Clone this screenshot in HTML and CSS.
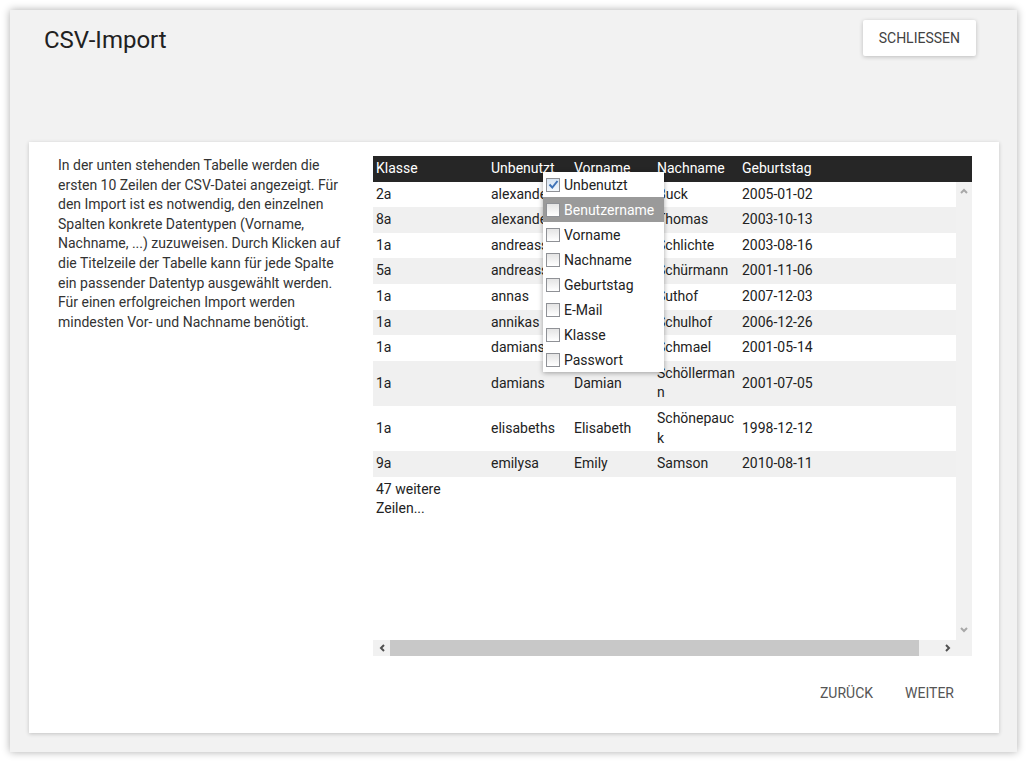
FILE: index.html
```html
<!DOCTYPE html>
<html lang="de">
<head>
<meta charset="utf-8">
<title>CSV-Import</title>
<link rel="stylesheet" href="styles.css">
</head>
<body>
<div class="dialog">
  <div class="dialog-header">
    <h1 class="title">CSV-Import</h1>
    <button class="btn-raised">Schliessen</button>
  </div>
  <div class="card">
    <div class="card-body">
      <p class="intro">In der unten stehenden Tabelle werden die ersten 10 Zeilen der CSV-Datei angezeigt. Für den Import ist es notwendig, den einzelnen Spalten konkrete Datentypen (Vorname, Nachname, ...) zuzuweisen. Durch Klicken auf die Titelzeile der Tabelle kann für jede Spalte ein passender Datentyp ausgewählt werden. Für einen erfolgreichen Import werden mindesten Vor- und Nachname benötigt.</p>
      <div class="table-wrap">
        <table class="grid grid-head">
          <colgroup><col class="c1"><col class="c2"><col class="c3"><col class="c4"><col class="c5"></colgroup>
          <tr><th>Klasse</th><th>Unbenutzt</th><th>Vorname</th><th>Nachname</th><th>Geburtstag</th></tr>
        </table>
        <div class="scroll-row">
          <div class="viewport">
            <table class="grid grid-body">
              <colgroup><col class="c1"><col class="c2"><col class="c3"><col class="c4"><col class="c5"></colgroup>
              <tr><td>2a</td><td>alexanderb</td><td>Alexander</td><td>Buck</td><td>2005-01-02</td></tr>
              <tr><td>8a</td><td>alexandert</td><td>Alexander</td><td>Thomas</td><td>2003-10-13</td></tr>
              <tr><td>1a</td><td>andreass</td><td>Andreas</td><td>Schlichte</td><td>2003-08-16</td></tr>
              <tr><td>5a</td><td>andreass</td><td>Andreas</td><td>Schürmann</td><td>2001-11-06</td></tr>
              <tr><td>1a</td><td>annas</td><td>Anna</td><td>Suthof</td><td>2007-12-03</td></tr>
              <tr><td>1a</td><td>annikas</td><td>Annika</td><td>Schulhof</td><td>2006-12-26</td></tr>
              <tr><td>1a</td><td>damians</td><td>Damian</td><td>Schmael</td><td>2001-05-14</td></tr>
              <tr><td>1a</td><td>damians</td><td>Damian</td><td>Schöllermann</td><td>2001-07-05</td></tr>
              <tr><td>1a</td><td>elisabeths</td><td>Elisabeth</td><td>Schönepauck</td><td>1998-12-12</td></tr>
              <tr><td>9a</td><td>emilysa</td><td>Emily</td><td>Samson</td><td>2010-08-11</td></tr>
              <tr><td>47 weitere Zeilen...</td><td></td><td></td><td></td><td></td></tr>
            </table>
          </div>
          <div class="vbar">
            <svg class="arrow" width="8" height="6" viewBox="0 0 8 6"><polyline points="1,5 4,2 7,5" fill="none" stroke="#a8a8a8" stroke-width="2"/></svg>
            <svg class="arrow" width="8" height="6" viewBox="0 0 8 6"><polyline points="1,1 4,4 7,1" fill="none" stroke="#a8a8a8" stroke-width="2"/></svg>
          </div>
        </div>
        <div class="hbar-row">
          <div class="hbar">
            <span class="hbtn"><svg width="6" height="8" viewBox="0 0 6 8"><polyline points="5,1 2,4 5,7" fill="none" stroke="#505050" stroke-width="2"/></svg></span>
            <span class="thumb"></span>
            <span class="hbtn"><svg width="6" height="8" viewBox="0 0 6 8"><polyline points="1,1 4,4 1,7" fill="none" stroke="#505050" stroke-width="2"/></svg></span>
          </div>
          <div class="corner"></div>
        </div>
        <div class="menu">
          <div class="menu-item"><span class="cb checked"><svg width="11" height="11" viewBox="0 0 11 11"><polyline points="1.5,5.5 4.3,8.5 9.5,2" fill="none" stroke="#3f73b8" stroke-width="2"/></svg></span>Unbenutzt</div>
          <div class="menu-item active"><span class="cb"></span>Benutzername</div>
          <div class="menu-item"><span class="cb"></span>Vorname</div>
          <div class="menu-item"><span class="cb"></span>Nachname</div>
          <div class="menu-item"><span class="cb"></span>Geburtstag</div>
          <div class="menu-item"><span class="cb"></span>E-Mail</div>
          <div class="menu-item"><span class="cb"></span>Klasse</div>
          <div class="menu-item"><span class="cb"></span>Passwort</div>
        </div>
      </div>
    </div>
    <div class="footer">
      <button class="btn-flat">Zurück</button>
      <button class="btn-flat">Weiter</button>
    </div>
  </div>
</div>
</body>
</html>
```
FILE: styles.css
```css
html, body {
  margin: 0;
  padding: 0;
  background: #ffffff;
  font-family: Roboto, "Liberation Sans", Arial, sans-serif;
}

.dialog {
  margin: 10px;
  width: 1007px;
  height: 742px;
  background: #f2f2f2;
  box-shadow: 0 0 8px rgba(0, 0, 0, 0.32);
  display: flex;
  flex-direction: column;
  box-sizing: border-box;
}

.dialog-header {
  height: 132px;
  flex: none;
  display: flex;
  justify-content: space-between;
  align-items: flex-start;
  padding: 10px 41px 0 34px;
  box-sizing: border-box;
}

.title {
  margin: 6px 0 0;
  font-size: 24px;
  font-weight: 400;
  line-height: 28px;
  color: #212121;
}

.btn-raised {
  height: 36px;
  padding: 0 16px;
  border: none;
  border-radius: 2px;
  background: #ffffff;
  box-shadow: 0 1px 4px rgba(0, 0, 0, 0.22);
  font-family: Roboto, "Liberation Sans", Arial, sans-serif;
  font-size: 14px;
  color: #424242;
  text-transform: uppercase;
}

.card {
  flex: 1;
  margin: 0 18px 19px 19px;
  background: #ffffff;
  box-shadow: 0 1px 4px rgba(0, 0, 0, 0.2);
  padding: 14px 27px 0 29px;
  display: flex;
  flex-direction: column;
}

.card-body {
  display: flex;
  gap: 27px;
}

.intro {
  width: 288px;
  margin: 0;
  font-size: 14px;
  line-height: 19.6px;
  color: #333333;
}

.table-wrap {
  position: relative;
  width: 599px;
}

.grid {
  border-collapse: collapse;
  table-layout: fixed;
  font-size: 14px;
  line-height: 19.6px;
}

.grid-head {
  width: 599px;
  background: #262626;
  color: #ffffff;
}

.grid-body {
  width: 583px;
  color: #222222;
}

.c1 { width: 115px; }
.c2 { width: 83px; }
.c3 { width: 83px; }
.c4 { width: 85px; }

.grid th,
.grid td {
  padding: 3px;
  text-align: left;
  font-weight: 400;
  vertical-align: middle;
  overflow-wrap: anywhere;
}

.grid-body tr:nth-child(even) {
  background: #f0f0f0;
}

.scroll-row {
  display: flex;
  height: 458px;
}

.viewport {
  width: 583px;
  overflow: hidden;
}

.vbar {
  width: 16px;
  background: #f1f1f1;
  display: flex;
  flex-direction: column;
  justify-content: space-between;
  align-items: center;
  padding: 6px 0 7px;
  box-sizing: border-box;
}

.arrow {
  display: block;
}

.hbar-row {
  display: flex;
  height: 16px;
}

.hbar {
  width: 583px;
  background: #f1f1f1;
  display: flex;
  align-items: stretch;
}

.hbtn {
  width: 17px;
  display: flex;
  align-items: center;
  justify-content: center;
}

.thumb {
  width: 529px;
  background: #c8c8c8;
  margin-right: 20px;
}

.corner {
  width: 16px;
  background: #f1f1f1;
}

.menu {
  position: absolute;
  left: 170px;
  top: 16px;
  width: 121px;
  background: #ffffff;
  box-shadow: 0 1px 5px rgba(0, 0, 0, 0.35);
}

.menu-item {
  height: 25px;
  display: flex;
  align-items: center;
  gap: 4px;
  padding-left: 3px;
  font-size: 14px;
  color: #222222;
}

.menu-item.active {
  background: #9a9a9a;
  color: #ffffff;
}

.cb {
  width: 14px;
  height: 14px;
  box-sizing: border-box;
  border: 1px solid #8f9196;
  background: linear-gradient(#e4e4e4, #ffffff);
  display: flex;
  align-items: center;
  justify-content: center;
  flex: none;
}

.cb.checked {
  background: linear-gradient(#d6e4f3, #f4f8fc);
}

.footer {
  display: flex;
  justify-content: flex-end;
  margin-top: 19px;
  padding-right: 2px;
}

.btn-flat {
  height: 36px;
  padding: 0 16px;
  border: none;
  background: transparent;
  font-family: Roboto, "Liberation Sans", Arial, sans-serif;
  font-size: 14px;
  color: #555555;
  text-transform: uppercase;
}
```
